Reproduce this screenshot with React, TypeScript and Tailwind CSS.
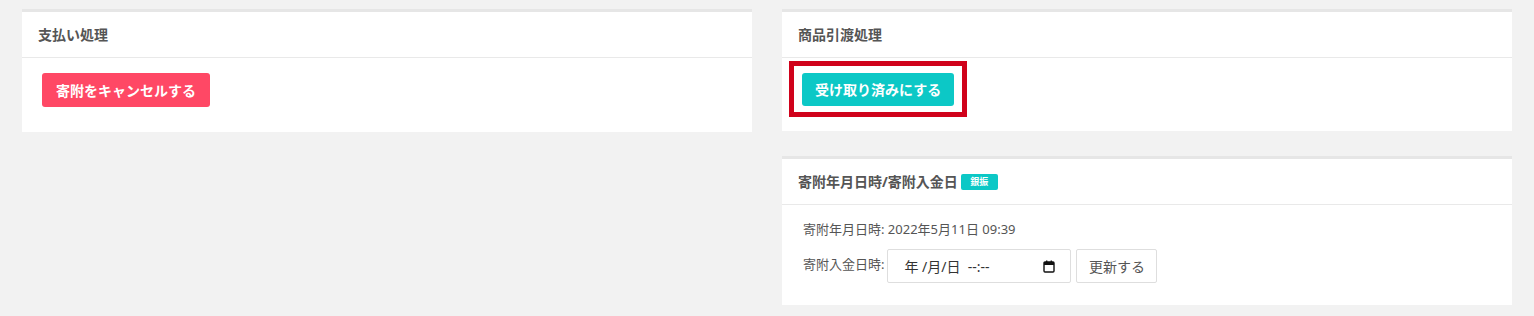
import React from "react";

const font = { fontFamily: '"Noto Sans", "Noto Sans CJK JP", sans-serif' };

function Card({ title, children }: { title: React.ReactNode; children: React.ReactNode }) {
    return (
        <div className="bg-white border-t-[3px] border-[#e6e6e6]">
            <div className="h-[46px] px-4 flex items-center border-b border-[#e9e9e9]">
                <h3 className="text-[14px] font-bold text-[#555] flex items-center gap-[3px]">{title}</h3>
            </div>
            {children}
        </div>
    );
}

function CalendarIcon() {
    return (
        <svg width="12" height="13" viewBox="0 0 12 13" fill="none">
            <rect x="1" y="2" width="10" height="10" rx="1" stroke="#111" strokeWidth="1.4" />
            <rect x="1" y="2" width="10" height="3" fill="#111" />
            <rect x="3" y="0.5" width="1.4" height="2.5" fill="#111" />
            <rect x="7.6" y="0.5" width="1.4" height="2.5" fill="#111" />
        </svg>
    );
}

export default function App() {
    return (
        <div className="min-h-[316px] bg-[#f2f2f2] px-[22px] pt-[9px]" style={font}>
            <div className="grid grid-cols-2 gap-[30px] items-start">
                <div>
                    <Card title="支払い処理">
                        <div className="pt-[15px] pb-[25px] px-5">
                            <button className="h-[34px] px-[14px] rounded-[3px] bg-[#ff4865] text-white text-[14px] font-bold">
                                寄附をキャンセルする
                            </button>
                        </div>
                    </Card>
                </div>

                <div className="flex flex-col gap-[25px]">
                    <Card title="商品引渡処理">
                        <div className="pt-[15px] pb-[25px] px-5">
                            <div className="relative inline-block">
                                <span className="absolute -left-[13px] -right-[13px] -top-[12px] -bottom-[11px] border-[5px] border-[#d0021b]"></span>
                                <button className="relative h-[33px] px-[13px] rounded-[3px] bg-[#0cc8c6] text-white text-[14px] font-bold">
                                    受け取り済みにする
                                </button>
                            </div>
                        </div>
                    </Card>

                    <Card
                        title={
                            <>
                                <span>寄附年月日時/寄附入金日</span>
                                <span className="inline-flex items-center justify-center w-[37px] h-[16px] rounded-[2px] bg-[#0cc8c6] text-white text-[9px] font-bold">
                                    銀振
                                </span>
                            </>
                        }
                    >
                        <div className="pt-[15px] pb-[22px] pl-[21px] pr-5 text-[13px] text-[#555]">
                            <p className="leading-[18px]">寄附年月日時: 2022年5月11日 09:39</p>
                            <div className="mt-[11px] flex items-center">
                                <span className="mr-[3px] -mt-[2px]">寄附入金日時:</span>
                                <div className="w-[184px] h-[34px] border border-[#dedede] rounded-[2px] flex items-center justify-between pl-[16px] pr-[15px] text-[14px] text-[#333]">
                                    <span className="whitespace-pre">年 /月/日  --:--</span>
                                    <CalendarIcon />
                                </div>
                                <button className="ml-[5px] w-[81px] h-[34px] border border-[#dedede] rounded-[2px] bg-white text-[14px] text-[#555]">
                                    更新する
                                </button>
                            </div>
                        </div>
                    </Card>
                </div>
            </div>
        </div>
    );
}
